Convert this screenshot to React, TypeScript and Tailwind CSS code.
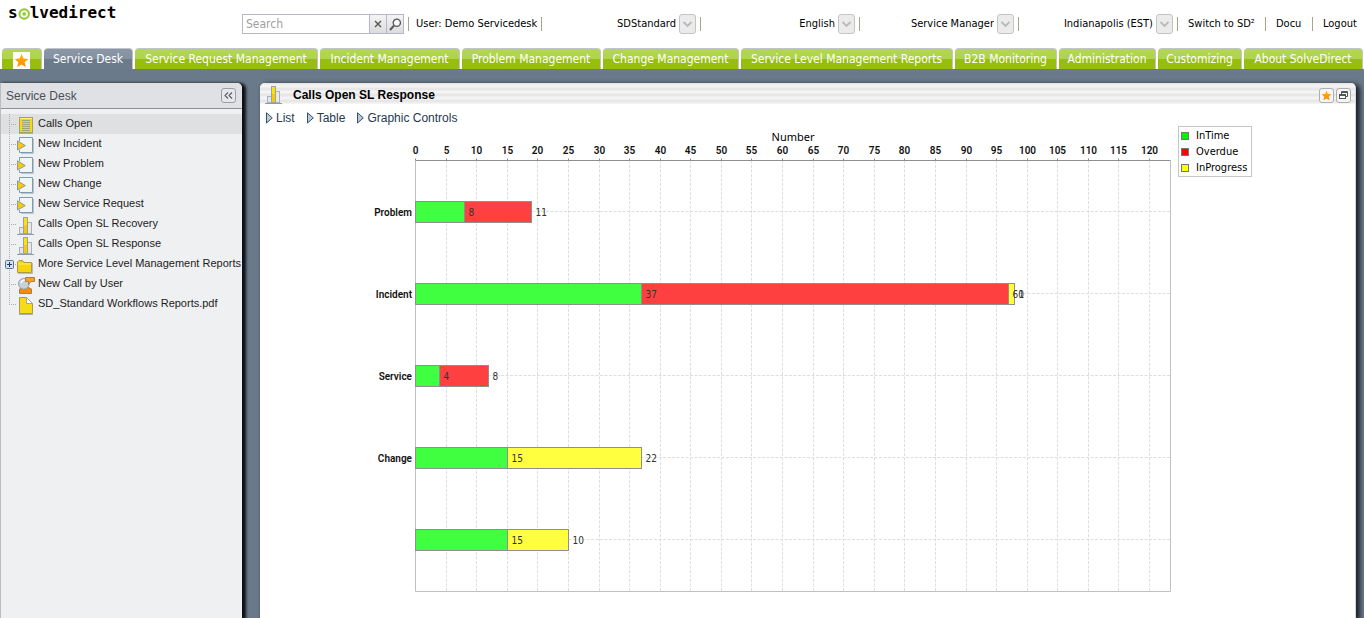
import React from "react";

const tabs = [
  { label: "Service Desk", width: "w-[89px]", active: true },
  { label: "Service Request Management", width: "w-[183px]" },
  { label: "Incident Management", width: "w-[140px]" },
  { label: "Problem Management", width: "w-[139px]" },
  { label: "Change Management", width: "w-[136px]" },
  { label: "Service Level Management Reports", width: "w-[212px]" },
  { label: "B2B Monitoring", width: "w-[102px]" },
  { label: "Administration", width: "w-[97px]" },
  { label: "Customizing", width: "w-[84px]" },
  { label: "About SolveDirect", width: "w-[119px]" },
];

const STAR = "M8 1 L10 5.9 L15.3 6.3 L11.3 9.8 L12.6 15 L8 12.2 L3.4 15 L4.7 9.8 L0.7 6.3 L6 5.9 Z";

function StarIcon({ className }: { className: string }) {
  return (
    <svg viewBox="0 0 16 16" className={className} aria-hidden="true">
      <defs>
        <linearGradient id="starFill" x1="0" y1="0" x2="0" y2="1">
          <stop offset="0" stopColor="#ffb400" />
          <stop offset="1" stopColor="#ff8a00" />
        </linearGradient>
      </defs>
      <path d={STAR} fill="url(#starFill)" />
    </svg>
  );
}

function ListIcon() {
  return (
    <svg width="18" height="18" viewBox="0 0 18 18" aria-hidden="true">
      <rect x="2.5" y="0.5" width="13" height="15" fill="#f7d90c" stroke="#a99d68" />
      <rect x="3" y="1" width="12" height="1" fill="#fff27a" />
      <path d="M5 3.5h8M5 5.5h8M5 7.5h8M5 9.5h8M5 11.5h8M5 13.5h8" stroke="#9aa37c" />
      <path d="M2 16.5h14" stroke="#a3b0b8" />
    </svg>
  );
}

function NewIcon() {
  return (
    <svg width="18" height="18" viewBox="0 0 18 18" aria-hidden="true">
      <path d="M4 16.5H16.5V2" fill="none" stroke="#b9c6cf" />
      <path d="M2.5 4V0.5H15.5V15.5H2.5V13" fill="#f2f5f7" stroke="#7f9cac" />
      <path d="M0.5 3.8L8.3 8.6L0.5 13Z" fill="#fbc90b" stroke="#8a9a98" />
    </svg>
  );
}

function BarsIcon() {
  return (
    <svg width="18" height="18" viewBox="0 0 18 18" aria-hidden="true">
      <rect x="2.5" y="10.5" width="5" height="6" fill="#e3e6ea" stroke="#a7b2bb" />
      <rect x="10.5" y="5.5" width="4" height="11" fill="#e9e9ec" stroke="#a7b2bb" />
      <rect x="6.5" y="0.5" width="4" height="16" fill="#fdc800" stroke="#98a5a8" />
      <rect x="7" y="1" width="3" height="7" fill="#ffe100" />
      <path d="M0 17.5h17" stroke="#8e9ba5" />
    </svg>
  );
}

function FolderIcon() {
  return (
    <svg width="18" height="18" viewBox="0 0 18 18" aria-hidden="true">
      <path d="M1 16.5h14.5V6" fill="none" stroke="#b3bdc4" />
      <path d="M0.5 5L2 3.5H5.5L7 5.5H14.5V15.5H0.5Z" fill="#f5d50d" stroke="#ab9a4c" />
      <path d="M1 7h13" stroke="#fff06a" />
    </svg>
  );
}

function UserCallIcon() {
  return (
    <svg width="18" height="18" viewBox="0 0 18 18" aria-hidden="true">
      <path d="M2.5 16.5V12L5 10.5H11.5L14.5 12V16.5Z" fill="#f58a0b" stroke="#a8804f" />
      <circle cx="6.8" cy="6.8" r="5.3" fill="#c9d1d8" stroke="#8fa0ad" />
      <path d="M4.2 6a3.5 3.5 0 0 1 3.5-3" stroke="#ffffff" strokeWidth="1.6" fill="none" />
      <path d="M8.5 0.5H17.5V4.5H14L11.5 7.5V4.5H8.5Z" fill="#ffa01c" stroke="#a8804f" />
    </svg>
  );
}

function FileIcon() {
  return (
    <svg width="18" height="18" viewBox="0 0 18 18" aria-hidden="true">
      <path d="M2.5 0.5H9.5L15.5 6.5V16.5H2.5Z" fill="#f7da18" stroke="#a99a52" />
      <path d="M9.5 0.5V6.5H15.5Z" fill="#ffffff" stroke="#a3a98c" />
      <path d="M2 17.5h14" stroke="#a3b0b8" />
    </svg>
  );
}

const tree: { label: string; Icon: () => React.JSX.Element; selected?: boolean; expandable?: boolean }[] = [
  { label: "Calls Open", Icon: ListIcon, selected: true },
  { label: "New Incident", Icon: NewIcon },
  { label: "New Problem", Icon: NewIcon },
  { label: "New Change", Icon: NewIcon },
  { label: "New Service Request", Icon: NewIcon },
  { label: "Calls Open SL Recovery", Icon: BarsIcon },
  { label: "Calls Open SL Response", Icon: BarsIcon },
  { label: "More Service Level Management Reports", Icon: FolderIcon, expandable: true },
  { label: "New Call by User", Icon: UserCallIcon },
  { label: "SD_Standard Workflows Reports.pdf", Icon: FileIcon },
];

function TreeGuide({ last, expandable }: { last: boolean; expandable?: boolean }) {
  return (
    <svg width="16" height="20" viewBox="0 0 16 20" className="shrink-0" aria-hidden="true">
      <path d={last ? "M8.5 0V11" : "M8.5 0V20"} stroke="#a9adb1" strokeDasharray="1 1" />
      <path d="M8 10.5H16" stroke="#a9adb1" strokeDasharray="1 1" />
      {expandable && (
        <g>
          <rect x="4.5" y="6.5" width="8" height="8" rx="1" fill="#d5deeb" stroke="#5d7290" />
          <path d="M6 10.5h5M8.5 8v5" stroke="#1f3c66" />
        </g>
      )}
    </svg>
  );
}

const combos = [
  { label: "Layout", value: "SDStandard" },
  { label: "Language", value: "English" },
  { label: "Role", value: "Service Manager" },
  { label: "Time zone", value: "Indianapolis (EST)" },
];

function Combo({ label, value }: { label: string; value: string }) {
  return (
    <div className="flex w-[159px] items-center justify-end">
      <div className="relative">
        <select
          aria-label={label}
          className="h-5 w-[140px] appearance-none bg-transparent pr-5 text-right [text-align-last:right]"
        >
          <option>{value}</option>
        </select>
        <span className="pointer-events-none absolute top-0 right-0 flex h-5 w-[17px] items-center justify-center rounded-[3px] border border-[#c4c4c4] bg-[#ebebeb]">
          <svg width="9" height="7" viewBox="0 0 9 7" aria-hidden="true">
            <path d="M0.5 1L4.5 5L8.5 1" fill="none" stroke="#b9b9b9" strokeWidth="1.8" />
          </svg>
        </span>
      </div>
      <Divider className="ml-1" />
    </div>
  );
}

function Divider({ className = "" }: { className?: string }) {
  return <span className={`h-[14px] w-px shrink-0 bg-[#aba28f] ${className}`} />;
}

function Header() {
  return (
    <header className="flex h-12 items-start text-[11px] text-black">
      <div
        aria-label="solvedirect"
        className="flex h-[26px] w-[242px] shrink-0 items-center pl-2 font-['DejaVu_Sans_Mono',monospace] text-[16px] font-bold"
      >
        <span>s</span>
        <svg width="12" height="12" viewBox="0 0 12 12" className="mt-[2px] shrink-0" aria-hidden="true">
          <circle cx="6.2" cy="6" r="4.7" fill="#f4faea" stroke="#8fc92c" strokeWidth="1.9" />
          <circle cx="6.2" cy="6" r="1.8" fill="#8fc92c" />
        </svg>
        <span>lvedirect</span>
      </div>
      <div className="flex h-12 grow items-center">
        <form className="flex h-5 border border-[#b5b8c8]" onSubmit={(e) => e.preventDefault()}>
          <input
            type="text"
            aria-label="Search"
            placeholder="Search"
            className="w-[126px] bg-white px-[3px] text-[12px] outline-none placeholder:text-[#a0a0a0]"
          />
          <button
            type="button"
            aria-label="Clear"
            className="flex w-[17px] items-center justify-center border-l border-[#b5b8c8] bg-linear-to-b from-[#f4f4f4] to-[#dcdcdc]"
          >
            <svg width="8" height="8" viewBox="0 0 8 8" aria-hidden="true">
              <path d="M1 1L7 7M7 1L1 7" stroke="#555" strokeWidth="1.4" />
            </svg>
          </button>
          <button
            type="submit"
            aria-label="Find"
            className="flex w-[17px] items-center justify-center border-l border-[#b5b8c8] bg-linear-to-b from-[#f4f4f4] to-[#dcdcdc]"
          >
            <svg width="13" height="13" viewBox="0 0 13 13" aria-hidden="true">
              <circle cx="7.8" cy="4.8" r="3.6" fill="#f8f8f8" stroke="#555" strokeWidth="1.3" />
              <path d="M5 7.6L1 12" stroke="#555" strokeWidth="2" />
            </svg>
          </button>
        </form>
        <Divider className="ml-1" />
        <span className="ml-[7px] w-[125px] whitespace-nowrap">User: Demo Servicedesk</span>
        <Divider />
        {combos.map((c) => (
          <Combo key={c.label} {...c} />
        ))}
        <nav className="flex items-center whitespace-nowrap">
          <a href="#switch" className="w-[87px] pl-[10px]">Switch to SD²</a>
          <Divider />
          <a href="#docu" className="w-[46px] pl-[10px]">Docu</a>
          <Divider />
          <a href="#logout" className="pl-[10px]">Logout</a>
        </nav>
      </div>
    </header>
  );
}

function TabBar() {
  const green =
    "bg-linear-to-b from-[#b3d755] from-0% via-[#aed34c] via-50% to-[#97be0d] to-50%";
  return (
    <nav className="flex h-[21px] items-stretch gap-[2px] pl-[2px] text-[12px] text-white">
      <a
        href="#favourites"
        aria-label="Favourites"
        className={`flex w-10 shrink-0 items-center justify-center rounded-t-[4px] border-t border-r border-[#c3c3c9] ${green}`}
      >
        <span className="mt-[2px] flex h-[17px] w-[17px] items-center justify-center bg-white">
          <StarIcon className="h-[15px] w-[15px]" />
        </span>
      </a>
      {tabs.map((t) => (
        <a
          key={t.label}
          href="#tab"
          className={`flex shrink-0 items-center justify-center rounded-t-[4px] border-t border-r border-[#c3c3c9] whitespace-nowrap ${t.width} ${
            t.active ? "bg-linear-to-b from-[#8997a6] from-0% via-[#8391a1] via-50% to-[#6c7b8b] to-50%" : green
          }`}
        >
          {t.label}
        </a>
      ))}
    </nav>
  );
}

function Sidebar() {
  return (
    <aside className="flex w-[242px] shrink-0 flex-col rounded-tr-[5px] border-l border-[#b9bcc0] bg-[#eff0f2] font-['Liberation_Sans',Arial,sans-serif] shadow-[3px_1px_3px_1px_#0b1015]">
      <div className="flex h-[26px] items-center justify-between rounded-tr-[5px] border-b border-[#8d9094] bg-[#dfe1e5] pr-[6px] pl-[5px] text-[12px] text-[#4a4f55]">
        <h2>Service Desk</h2>
        <button
          type="button"
          aria-label="Collapse"
          className="flex h-[15px] w-[15px] items-center justify-center rounded-[3px] border border-[#9b9ea3] bg-[#e6e7ea]"
        >
          <svg width="9" height="7" viewBox="0 0 9 7" aria-hidden="true">
            <path d="M4 0.5L1 3.5L4 6.5M8 0.5L5 3.5L8 6.5" fill="none" stroke="#5f6266" strokeWidth="1.2" />
          </svg>
        </button>
      </div>
      <ul className="pt-[5px] text-[11px] text-[#1c1c1c]">
        {tree.map(({ label, Icon, selected, expandable }, i) => (
          <li key={label} className={selected ? "bg-[#dfe0e1]" : ""}>
            <a href="#item" className="flex h-5 items-center">
              <TreeGuide last={i === tree.length - 1} expandable={expandable} />
              <span className="mt-1 shrink-0">
                <Icon />
              </span>
              <span className="pb-px pl-[3px] whitespace-nowrap">{label}</span>
            </a>
          </li>
        ))}
      </ul>
    </aside>
  );
}

type Segment = { value: number; color: "green" | "red" | "yellow" };
const fills = { green: "#40ff40", red: "#ff4040", yellow: "#ffff40" };
const rows: { label: string; segments: Segment[] }[] = [
  { label: "Problem", segments: [{ value: 8, color: "green" }, { value: 11, color: "red" }] },
  {
    label: "Incident",
    segments: [{ value: 37, color: "green" }, { value: 60, color: "red" }, { value: 1, color: "yellow" }],
  },
  { label: "Service", segments: [{ value: 4, color: "green" }, { value: 8, color: "red" }] },
  { label: "Change", segments: [{ value: 15, color: "green" }, { value: 22, color: "yellow" }] },
  { label: "", segments: [{ value: 15, color: "green" }, { value: 10, color: "yellow" }] },
];

function Chart() {
  const left = 45.5;
  const right = 800.5;
  const top = 34.5;
  const bottom = 465.5;
  const unit = 6.117;
  const ticks = Array.from({ length: 25 }, (_, i) => i * 5);
  const x = (v: number) => Math.floor(left + v * unit) + 0.5;
  const y = (i: number) => 85.5 + i * 82;
  return (
    <svg
      viewBox="0 0 804 472"
      className="h-auto w-full max-w-[804px] min-w-0 font-['DejaVu_Sans_Condensed','Noto_Sans',sans-serif]"
      role="img"
      aria-label="Calls open by type"
    >
      <text x="423" y="15" textAnchor="middle" fontSize="11" fill="#000" className="font-['Noto_Sans',sans-serif]">
        Number
      </text>
      <g stroke="#dedede" strokeDasharray="3 1.5">
        {ticks.slice(1).map((t) => (
          <line key={t} x1={x(t)} x2={x(t)} y1={top} y2={bottom} />
        ))}
        {rows.map((_, i) => (
          <line key={i} x1={left} x2={right} y1={y(i)} y2={y(i)} />
        ))}
      </g>
      <g stroke="#8a8a8a">
        {ticks.map((t) => (
          <line key={t} x1={x(t)} x2={x(t)} y1={top - 2} y2={top} />
        ))}
      </g>
      <path d={`M${left} ${top}V${bottom}H${right}V${top}`} fill="none" stroke="#c0c0c0" />
      <path d={`M${left} ${top}H${right}`} stroke="#8f8f8f" />
      <g fontSize="10" fontWeight="600" textAnchor="middle" fill="#111" className="font-[Roboto,sans-serif]">
        {ticks.map((t) => (
          <text key={t} x={x(t)} y="28">{t}</text>
        ))}
      </g>
      {rows.map((row, i) => {
        let sum = 0;
        const parts = row.segments.map((s) => {
          const start = sum;
          sum += s.value;
          return { ...s, start, end: sum };
        });
        return (
          <g key={i}>
            <text
              x="42"
              y={y(i) + 4}
              textAnchor="end"
              fontSize="10"
              fontWeight="600"
              fill="#111"
              className="font-[Roboto,sans-serif]"
            >
              {row.label}
            </text>
            {parts.map((p) => (
              <rect
                key={p.color}
                x={x(p.start)}
                y={y(i) - 10}
                width={x(p.end) - x(p.start)}
                height="21"
                fill={fills[p.color]}
                stroke="#8f8f8f"
              />
            ))}
            {parts.map((p) => (
              <text key={p.color} x={x(p.end) + 4} y={y(i) + 4} fontSize="10" fill="#333">
                {p.value}
              </text>
            ))}
          </g>
        );
      })}
    </svg>
  );
}

function Legend() {
  const items = [
    { label: "InTime", swatch: "bg-[#00f500]" },
    { label: "Overdue", swatch: "bg-[#ff0000]" },
    { label: "InProgress", swatch: "bg-[#ffff00]" },
  ];
  return (
    <ul className="ml-1 w-[74px] shrink-0 border border-[#c6c6c6] pt-px pl-[2px] font-['DejaVu_Sans_Condensed','Noto_Sans',sans-serif] text-[11px] leading-4 text-black">
      {items.map((it) => (
        <li key={it.label} className="flex items-center gap-[7px]">
          <span className={`h-2 w-2 shrink-0 border border-[#777] ${it.swatch}`} />
          {it.label}
        </li>
      ))}
    </ul>
  );
}

function MainPanel() {
  return (
    <main className="flex min-w-0 grow flex-col rounded-t-[5px] border-r border-[#d5d8da] bg-white font-['Liberation_Sans',Arial,sans-serif] shadow-[3px_2px_5px_1px_#1a222b]">
      <div className="flex h-[21px] items-center rounded-t-[5px] bg-[repeating-linear-gradient(to_bottom,#e4e4e4_0px,#f7f7f7_3px,#e4e4e4_6px)] pr-1 pl-[5px]">
        <span className="mt-[3px]">
          <BarsIcon />
        </span>
        <h1 className="ml-[10px] grow pt-[3px] text-[12px] font-bold text-black">Calls Open SL Response</h1>
        <button
          type="button"
          aria-label="Add to favourites"
          className="mt-[3px] mr-[2px] flex h-[15px] w-[15px] items-center justify-center rounded-[3px] border border-[#adadad] bg-[#f6f6f6]"
        >
          <StarIcon className="h-[11px] w-[11px]" />
        </button>
        <button
          type="button"
          aria-label="Restore window"
          className="mt-[3px] flex h-[15px] w-[15px] items-center justify-center rounded-[3px] border border-[#adadad] bg-[#f6f6f6]"
        >
          <svg width="9" height="9" viewBox="0 0 9 9" fill="none" stroke="#555" aria-hidden="true">
            <path d="M2.5 3V0.5H8.5V5.5H7" />
            <path d="M2.5 1.5H8.5" />
            <rect x="0.5" y="3.5" width="6" height="4" fill="#fff" />
            <path d="M0.5 4.5H6.5" />
          </svg>
        </button>
      </div>
      <div className="flex h-[22px] items-center gap-3 pt-[5px] pl-[6px] text-[12px] text-[#27384f]">
        {["List", "Table", "Graphic Controls"].map((label) => (
          <button key={label} type="button" className="flex items-center gap-[3px]">
            <svg width="7" height="12" viewBox="0 0 7 12" aria-hidden="true">
              <path d="M0.5 0.8V11L6.3 5.9Z" fill="#b9cbd9" stroke="#33506b" />
            </svg>
            {label}
          </button>
        ))}
      </div>
      <div className="flex items-start pl-[110px]">
        <Chart />
        <Legend />
      </div>
    </main>
  );
}

export default function App() {
  return (
    <div className="flex min-h-screen flex-col overflow-hidden bg-white font-['DejaVu_Sans_Condensed','Noto_Sans',sans-serif]">
      <Header />
      <TabBar />
      <div className="flex grow gap-[18px] overflow-hidden bg-[#6b7a8a] pt-[14px] pr-2">
        <Sidebar />
        <MainPanel />
      </div>
    </div>
  );
}
